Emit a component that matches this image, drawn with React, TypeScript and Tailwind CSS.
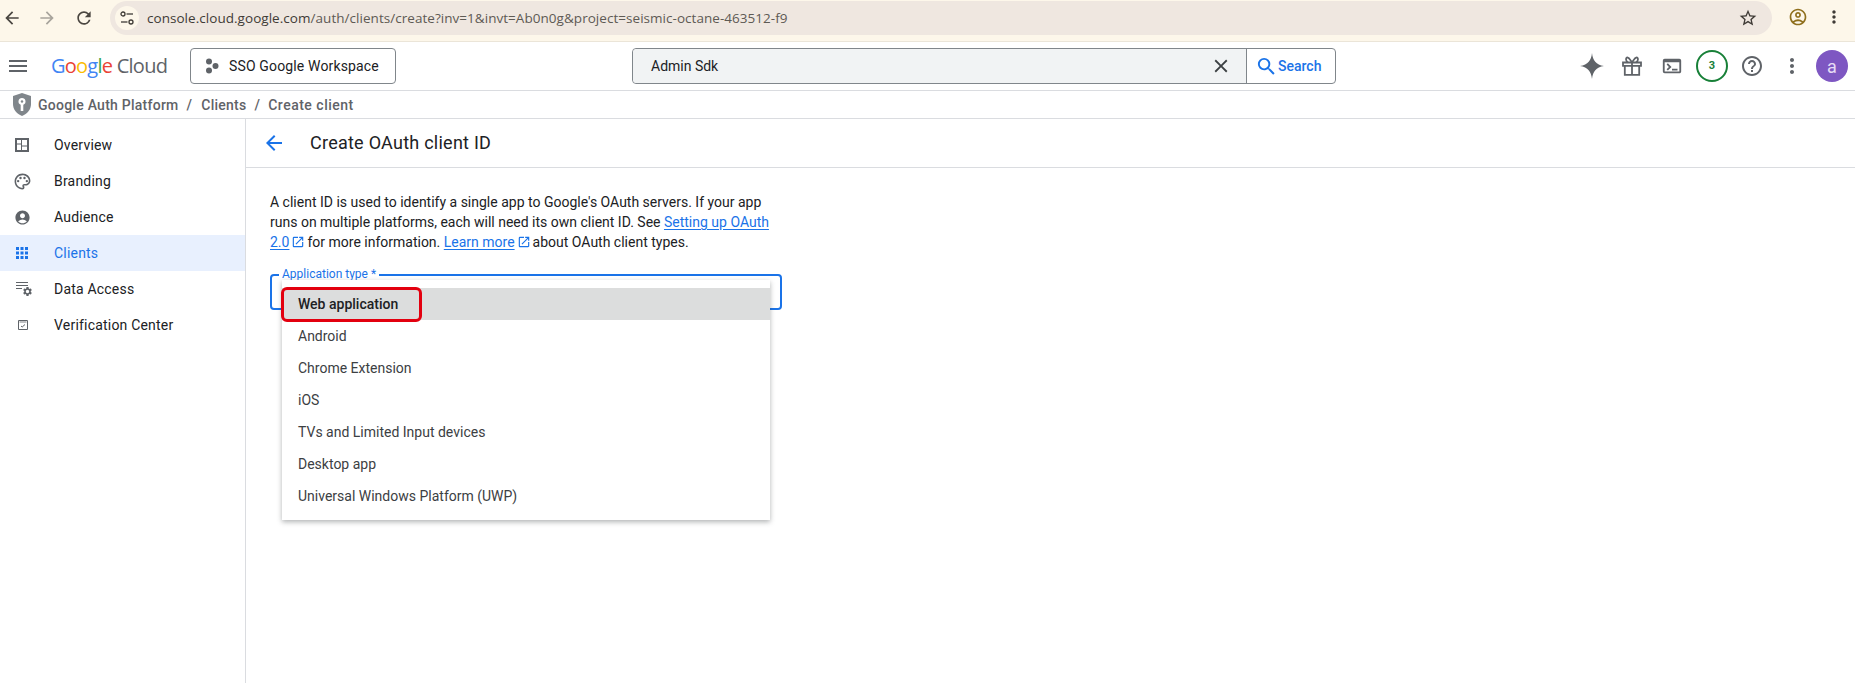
import {
  MdAccountCircle,
  MdApps,
  MdArrowBack,
  MdClose,
  MdHelpOutline,
  MdMenu,
  MdMoreVert,
  MdOpenInNew,
  MdOutlineAccountCircle,
  MdOutlinePalette,
  MdOutlineTerminal,
  MdRefresh,
  MdSearch,
  MdSettings,
  MdStarBorder,
} from "react-icons/md";

const OverviewIcon = () => (
  <svg width="14" height="14" viewBox="0 0 14 14">
    <path fill="#5f6368" fillRule="evenodd" d="M0 0h14v14H0zM2 2v3.500h4V2zM2 6.500V12h4V6.500zM7 2v5.500h5V2zM7 8.500V12h5V8.500z" />
  </svg>
);

const DataAccessIcon = () => (
  <span className="relative block w-[16px] h-[14px] ml-[1px]">
    <span className="absolute left-0 top-[0px] w-[12px] h-[1px] bg-[#5f6368]" />
    <span className="absolute left-0 top-[3px] w-[12px] h-[1px] bg-[#5f6368]" />
    <span className="absolute left-0 top-[6px] w-[6px] h-[1px] bg-[#5f6368]" />
    <MdSettings className="absolute left-[6px] top-[4px] text-[#5f6368]" size={11} />
  </span>
);

const VerifyIcon = () => (
  <svg className="ml-[3px]" width="10" height="10" viewBox="0 0 10 10" fill="none" stroke="#5f6368">
    <path d="M.5.5h9v9h-9z" />
    <path d="M1.500 2h7" strokeWidth=".8" />
    <path d="M3 6l1.200 1L7 4.500" />
  </svg>
);

const GiftIcon = () => (
  <svg width="20" height="20" viewBox="0 0 20 20" fill="none" stroke="#5f6368" strokeWidth="1.800">
    <path d="M1 6.500h18v3.300H1z" />
    <path d="M2.800 9.800v9h14.400v-9" />
    <path d="M10 6.500v12.300" />
    <path d="M10 6.500C8.500 4.500 7.500 1.500 5.500 1.500 3.500 1.500 3.500 5 6 6.500" />
    <path d="M10 6.500c1.500-2 2.500-5 4.500-5 2 0 2 3.500-.5 5" />
  </svg>
);

const Spark = () => (
  <svg width="24" height="26" viewBox="0 0 24 26">
    <path fill="#5f6368" d="M12 0C12.800 7.500 16 11.700 24 13 16 14.300 12.800 18.500 12 26 11.200 18.500 8 14.300 0 13 8 11.700 11.200 7.500 12 0Z" />
  </svg>
);

const ShieldIcon = () => (
  <svg width="20" height="23" viewBox="0 0 20 23">
    <path fill="#80868b" d="M10 0l9 3v8c0 5.500-3.700 9.800-9 12-5.300-2.200-9-6.500-9-12V3z" />
    <path fill="#fff" d="M10 5a3.500 3.500 0 0 1 1.300 6.750V18H8.700v-6.250A3.500 3.500 0 0 1 10 5z" />
    <circle cx="10" cy="8.500" r="1.200" fill="#80868b" />
  </svg>
);

const TuneIcon = () => (
  <svg width="14" height="14" viewBox="0 0 14 14" fill="none" stroke="#3f3b36" strokeWidth="1.300">
    <circle cx="3" cy="3" r="2" />
    <path d="M6.500 3H13" />
    <circle cx="11" cy="11" r="2" />
    <path d="M1 11h6.500" />
  </svg>
);

const navItems = [
  { label: "Overview", icon: <OverviewIcon /> },
  { label: "Branding", icon: <MdOutlinePalette size={19} className="-ml-[2px]" /> },
  { label: "Audience", icon: <MdAccountCircle size={17} className="-ml-[1px]" /> },
  { label: "Clients", icon: <MdApps size={18} />, active: true },
  { label: "Data Access", icon: <DataAccessIcon /> },
  { label: "Verification Center", icon: <VerifyIcon /> },
];

const options = [
  "Android",
  "Chrome Extension",
  "iOS",
  "TVs and Limited Input devices",
  "Desktop app",
  "Universal Windows Platform (UWP)",
];

const ChromeBar = () => (
  <div className="h-[42px] shrink-0 flex bg-[#fdf7ea] border-b border-[#ebe5d8] font-['Open_Sans',sans-serif]">
    <div className="w-[110px] shrink-0 flex items-center pb-[5px] pl-[2px] text-[#4a4640]">
      <MdArrowBack size={20} />
      <MdArrowBack size={20} className="ml-[15px] rotate-180 text-[#a8a49c]" />
      <MdRefresh size={20} className="ml-[17px]" />
    </div>
    <div className="w-[1662px] h-[34px] mt-[1px] flex items-center rounded-[17px] bg-[#efe7e0]">
      <span className="ml-[5px] w-[24px] h-[24px] rounded-full bg-[#fdf7ea] flex items-center justify-center">
        <TuneIcon />
      </span>
      <span className="ml-[8px] text-[13.500px] tracking-[0.04px] text-[#3f3b36]">
        console.cloud.google.com<span className="text-[#5e5a54]">/auth/clients/create?inv=1&amp;invt=Ab0n0g&amp;project=seismic-octane-463512-f9</span>
      </span>
      <MdStarBorder size={20} className="ml-auto mr-[14px] text-[#3f3b36]" />
    </div>
    <div className="flex-1 flex items-center pb-[7px] pl-[16px]">
      <MdOutlineAccountCircle size={20} className="text-[#8f6f1d]" />
      <MdMoreVert size={20} className="ml-[16px] text-[#3f3b36]" />
    </div>
  </div>
);

const ActionSlot = ({ children }: { children: React.ReactNode }) => (
  <span className="w-[40px] flex items-center justify-center text-[#5f6368]">{children}</span>
);

const TopNav = () => (
  <div className="h-[49px] shrink-0 flex items-center border-b border-[#dadce0] bg-white">
    <MdMenu size={24} className="ml-[6px] text-[#5f6368]" />
    <div className="ml-[21px] w-[139px] text-[20px] leading-none font-['Open_Sans',sans-serif] tracking-[-0.75px] whitespace-nowrap">
      <span className="text-[#4285f4]">G</span>
      <span className="text-[#ea4335]">o</span>
      <span className="text-[#fbbc04]">o</span>
      <span className="text-[#4285f4]">g</span>
      <span className="text-[#34a853]">l</span>
      <span className="text-[#ea4335]">e</span>
      <span className="text-[#5f6368]"> Cloud</span>
    </div>
    <button className="w-[206px] h-[36px] flex items-center rounded border border-[#80868b] text-[14px] text-[#202124] tracking-[0.15px]">
      <svg className="ml-[14px]" width="14" height="16" viewBox="0 0 14 16">
        <circle cx="4" cy="3.500" r="3" fill="#5f6368" />
        <circle cx="10.500" cy="8" r="3" fill="#5f6368" />
        <circle cx="4" cy="12.500" r="3" fill="#5f6368" />
      </svg>
      <span className="ml-[10px]">SSO Google Workspace</span>
    </button>
    <div className="ml-[236px] w-[704px] h-[36px] flex rounded border border-[#80868b]">
      <div className="w-[614px] flex items-center bg-[#f1f3f4] rounded-l border-r border-[#80868b] pl-[18px] pr-[14px] text-[14px] text-[#202124]">
        Admin Sdk
        <MdClose size={22} className="ml-auto text-[#3c4043]" />
      </div>
      <div className="flex-1 flex items-center pl-[9px] text-[#1a73e8] text-[14px] font-medium">
        <MdSearch size={23} className="-ml-[1px]" />
        Search
      </div>
    </div>
    <div className="ml-auto mr-[3px] flex items-center">
      <ActionSlot>
        <Spark />
      </ActionSlot>
      <ActionSlot>
        <GiftIcon />
      </ActionSlot>
      <ActionSlot>
        <MdOutlineTerminal size={22} />
      </ActionSlot>
      <ActionSlot>
        <span className="w-[32px] h-[32px] rounded-full border-2 border-[#188038] flex items-center justify-center text-[11px] font-bold text-[#188038]">
          3
        </span>
      </ActionSlot>
      <ActionSlot>
        <MdHelpOutline size={24} />
      </ActionSlot>
      <ActionSlot>
        <MdMoreVert size={24} />
      </ActionSlot>
      <ActionSlot>
        <span className="w-[32px] h-[32px] rounded-full bg-[#7e57c2] text-[#e6dcf5] flex items-center justify-center text-[18px]">
          a
        </span>
      </ActionSlot>
    </div>
  </div>
);

const Breadcrumbs = () => (
  <div className="h-[28px] shrink-0 flex items-center border-b border-[#dadce0] pl-[12px] text-[14px] font-medium text-[#5f6368] tracking-[0.25px]">
    <ShieldIcon />
    <span className="ml-[6px] pt-[1px]">Google Auth Platform</span>
    <span className="ml-[8px] mr-[9px] pt-[1px]">/</span>
    <span className="pt-[1px]">Clients</span>
    <span className="mx-[8px] pt-[1px]">/</span>
    <span className="pt-[1px] tracking-[0.5px]">Create client</span>
  </div>
);

const Sidebar = () => (
  <div className="w-[246px] shrink-0 border-r border-[#dadce0] pt-[8px]">
    {navItems.map((item) => (
      <div
        key={item.label}
        className={
          item.active
            ? "h-[36px] flex items-center bg-[#e8f0fe] text-[#1a73e8] text-[14px] tracking-[0.2px]"
            : "h-[36px] flex items-center text-[#202124] text-[14px] tracking-[0.2px]"
        }
      >
        <span className={item.active ? "w-[54px] pl-[13px] text-[#1a73e8]" : "w-[54px] pl-[15px] text-[#5f6368]"}>{item.icon}</span>
        {item.label}
      </div>
    ))}
  </div>
);

const Link = ({ children }: { children: string }) => (
  <span className="text-[#1a73e8] underline underline-offset-2">{children}</span>
);

const Ext = () => <MdOpenInNew size={14} className="inline mx-[2px] align-[-2px] text-[#1a73e8]" />;

const Content = () => (
  <div className="flex-1">
    <div className="h-[49px] flex items-center border-b border-[#dadce0] pl-[16px]">
      <MdArrowBack size={24} className="text-[#1a73e8] mr-[24px]" />
      <h1 className="text-[18px] text-[#202124] tracking-[0.25px] pb-[1px]">Create OAuth client ID</h1>
    </div>
    <p className="ml-[24px] mt-[24px] w-[520px] text-[14px] leading-[20px] text-[#202124]">
      A client ID is used to identify a single app to Google's OAuth servers. If your app runs on multiple platforms, each will need its own client ID. See{" "}
      <Link>Setting up OAuth 2.0</Link>
      <Ext />
      for more information. <Link>Learn more</Link>
      <Ext />
      about OAuth client types.
    </p>
    <div className="relative ml-[24px] mt-[22px] w-[512px] h-[36px] rounded border-2 border-[#1a73e8]">
      <span className="absolute left-[7px] -top-[9px] bg-white px-[3px] text-[12px] leading-[14px] text-[#1a73e8]">Application type *</span>
      <div className="absolute left-[10px] top-[4px] w-[488px] bg-white py-[8px] shadow-[0_2px_5px_rgba(60,64,67,0.4)] text-[14px] text-[#3c4043] z-10">
        <div className="h-[32px] flex items-center pl-[16px] bg-[#dcdddd] font-medium text-[#202124] relative">
          Web application
          <span className="absolute -left-[1px] -top-[1px] w-[141px] h-[35px] rounded-[6px] border-[3px] border-[#e3000f]" />
        </div>
        {options.map((o) => (
          <div key={o} className="h-[32px] flex items-center pl-[16px]">
            {o}
          </div>
        ))}
      </div>
    </div>
  </div>
);

export default function App() {
  return (
    <div className="h-[683px] w-[1855px] overflow-hidden flex flex-col bg-white font-['Roboto',sans-serif]">
      <ChromeBar />
      <TopNav />
      <Breadcrumbs />
      <div className="flex-1 flex">
        <Sidebar />
        <Content />
      </div>
    </div>
  );
}
